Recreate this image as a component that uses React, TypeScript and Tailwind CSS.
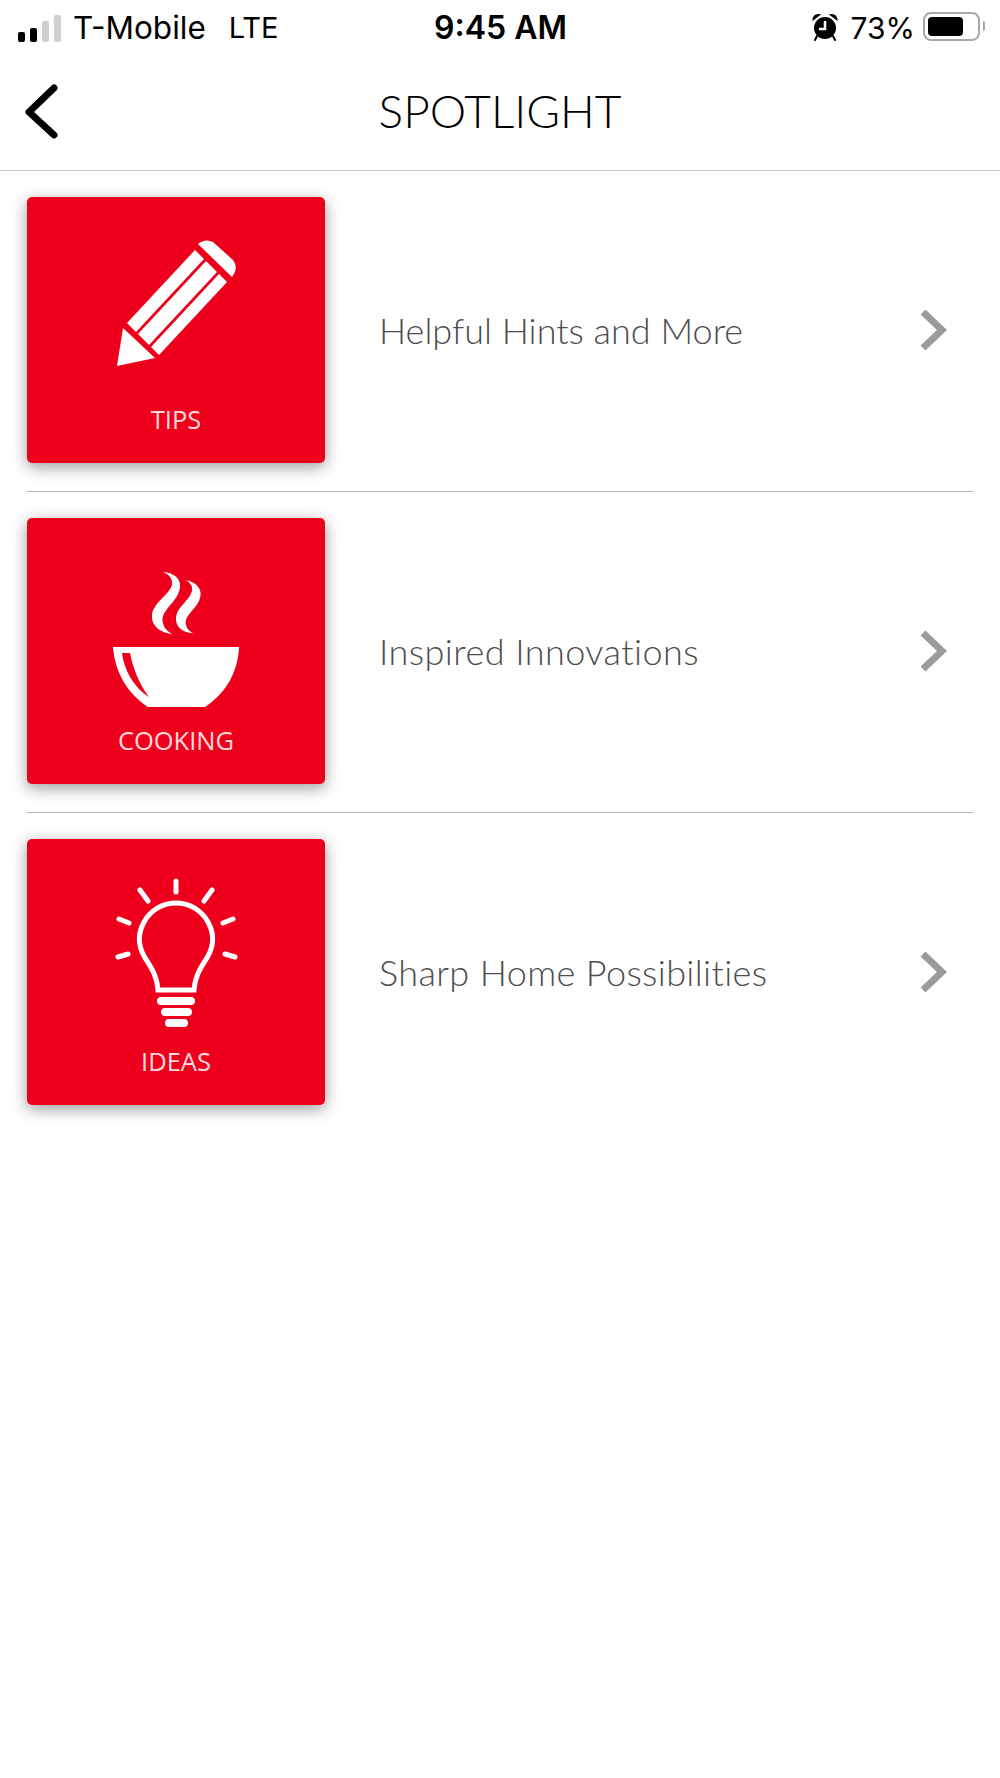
import React from 'react';

function PencilIcon() {
  return (
    <svg viewBox="74 20 150 180" className="w-[150px] h-[180px]" fill="#fff">
      <path d="M96 131L128 161L90 169Z" />
      <path d="M100 126L168 53L177 62L109 135Z" />
      <path d="M111 137L179 64L190 75L122 148Z" />
      <path d="M124 150L192 77L200 85L132 158Z" />
      <path d="M171 47Q178 41 186 45L206 63Q212 71 205 80Z" />
    </svg>
  );
}

function BowlIcon() {
  return (
    <svg viewBox="74 20 150 180" className="w-[150px] h-[180px]" fill="#fff">
      <path d="M136 54C150 55 157 64 151 76C146 87 133 94 136 105C137 110 140 113 145 116C134 115 124 108 125 97C126 85 142 77 145 67C146 61 142 56 136 54Z" />
      <path d="M158 62C170 64 177 72 172 83C167 93 157 98 159 107C160 111 162 113 166 115C155 115 148 108 149 99C150 89 163 82 165 73C166 68 163 64 158 62Z" />
      <path
        fillRule="evenodd"
        d="M86 129H212C211 155 198 176 178 189H121C101 176 88 155 86 129ZM95 135C97 152 107 170 122 179C112 166 106 150 103 135Z"
      />
    </svg>
  );
}

function BulbIcon() {
  return (
    <svg viewBox="74 20 150 180" className="w-[150px] h-[180px]" fill="none" stroke="#fff" strokeLinecap="round">
      <path
        strokeWidth="5"
        d="M131 151H167C168 135 176 126 181 117C187 106 187 94 181 83C174 70 161 64 149 64C137 64 124 70 117 83C111 94 111 106 117 117C122 126 130 135 131 151Z"
      />
      <path
        strokeWidth="5"
        d="M149 42V53M113 51L121 62M185 51L177 62M92 80L102 84M206 80L196 84M91 118L101 115M208 118L198 115"
      />
      <path strokeWidth="8" d="M134 162H164M138 173H161M142 184H157" />
    </svg>
  );
}

function AlarmIcon() {
  return (
    <svg viewBox="0 0 26 28" className="w-[26px] h-[28px] -mt-[2px]">
      <circle cx="13" cy="15" r="11" fill="#000" />
      <path d="M0.500 8C0 3 4 0 9 1.500ZM25.500 8C26 3 22 0 17 1.500Z" fill="#000" />
      <path d="M5 23L3 27M21 23L23 27" stroke="#000" strokeWidth="2" strokeLinecap="round" />
      <path d="M13 8V16H7" stroke="#fff" strokeWidth="2.500" fill="none" />
    </svg>
  );
}

function SignalBars() {
  return (
    <div className="flex items-end gap-[5px] h-[27px]">
      <div className="w-[7px] h-[10px] rounded-[2px] bg-black" />
      <div className="w-[7px] h-[14px] rounded-[2px] bg-black" />
      <div className="w-[7px] h-[21px] rounded-[2px] bg-[#cfcfcf]" />
      <div className="w-[7px] h-[27px] rounded-[2px] bg-[#cfcfcf]" />
    </div>
  );
}

function Battery() {
  return (
    <div className="flex items-center gap-[3px]">
      <div className="w-[57px] h-[29px] rounded-[8px] border-2 border-[#a8a8a8] p-[3px] bg-white">
        <div className="w-[35px] h-full rounded-[4px] bg-black" />
      </div>
      <div className="w-[2px] h-[10px] rounded-r-sm bg-[#a8a8a8]" />
    </div>
  );
}

function RowChevron() {
  return (
    <svg viewBox="0 0 28 42" className="w-[28px] h-[42px]" fill="none" stroke="#9b9b9b" strokeWidth="7">
      <path d="M4 3L23 21L4 39" />
    </svg>
  );
}

const rows = [
  { label: 'TIPS', title: 'Helpful Hints and More', tracking: 'tracking-normal', icon: <PencilIcon /> },
  { label: 'COOKING', title: 'Inspired Innovations', tracking: 'tracking-[0.45px]', icon: <BowlIcon /> },
  { label: 'IDEAS', title: 'Sharp Home Possibilities', tracking: 'tracking-[0.38px]', icon: <BulbIcon /> },
];

export default function App() {
  return (
    <div className="w-[1000px] h-[1778px] bg-white overflow-hidden font-['Lato',sans-serif]">
      {/* status bar */}
      <div className="h-[52px] grid grid-cols-[1fr_auto_1fr] items-center pl-[18px] pr-[15px] pt-[4px] text-black text-[30px] font-['Inter',sans-serif]">
        <div className="flex items-center">
          <SignalBars />
          <span className="ml-[12px] text-[31.500px]">T-Mobile</span>
          <span className="ml-[23px] text-[29px]">LTE</span>
        </div>
        <span className="font-semibold text-[32px] -ml-[2px]">9:45 AM</span>
        <div className="flex items-center justify-end">
          <AlarmIcon />
          <span className="ml-[13px] mr-[8px]">73%</span>
          <div className="-mt-[4px]"><Battery /></div>
        </div>
      </div>

      {/* nav */}
      <div className="h-[119px] grid grid-cols-[1fr_auto_1fr] items-center px-[23px] border-b border-[#c8c8c8]">
        <svg viewBox="0 0 40 60" className="w-[40px] h-[60px]" fill="none" stroke="#000" strokeWidth="7" strokeLinecap="round" strokeLinejoin="round">
          <path d="M31 7L6 31L31 54" />
        </svg>
        <h1 className="text-[46px] -mt-[2px] font-light text-black">SPOTLIGHT</h1>
        <div />
      </div>

      {/* list */}
      <div className="px-[27px]">
        {rows.map((row, i) => (
          <div
            key={row.label}
            className={`flex items-center pt-[26px] pb-[28px] ${i < rows.length - 1 ? 'border-b border-[#b5b5b5]' : ''}`}
          >
            <div className="w-[298px] h-[266px] rounded-[5px] bg-[#ee001c] shadow-[0_4px_16px_rgba(0,0,0,0.4)] flex flex-col items-center pt-[20px]">
              {row.icon}
              <span className="mt-[7px] text-[25.500px] leading-[30px] font-medium text-[#ffd9dc] font-['Open_Sans',sans-serif]">{row.label}</span>
            </div>
            <span className={`ml-[54px] flex-1 text-[36px] font-light text-[#4d4d4d] [font-variant-ligatures:none] ${row.tracking}`}>{row.title}</span>
            <div className="mr-[26px] flex"><RowChevron /></div>
          </div>
        ))}
      </div>
    </div>
  );
}
